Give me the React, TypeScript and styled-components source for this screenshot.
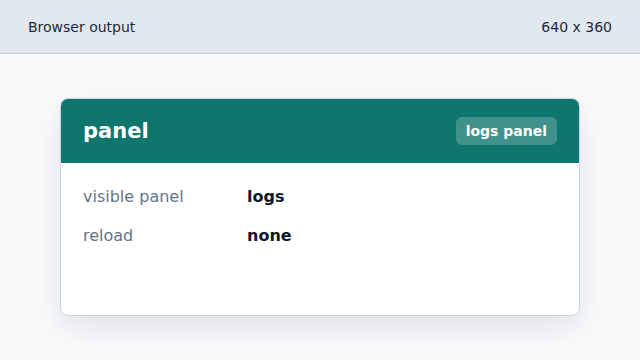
import React from "react";
import styled, { createGlobalStyle } from "styled-components";

const Global = createGlobalStyle`
  html, body { margin: 0; padding: 0; }
  body {
    font-family: "DejaVu Sans", "Liberation Sans", sans-serif;
    background: #f8fafc;
    width: 640px;
    height: 360px;
    overflow: hidden;
  }
`;

const Page = styled.div`
  display: flex;
  flex-direction: column;
  width: 640px;
  height: 360px;
`;

const TopBar = styled.header`
  display: flex;
  align-items: center;
  justify-content: space-between;
  height: 53px;
  padding: 0 28px;
  background: #e2e8f0;
  border-bottom: 1px solid #cbd5e1;
  color: #1e293b;
  font-size: 14px;
  flex-shrink: 0;
`;

const Stage = styled.main`
  flex: 1;
  display: flex;
  align-items: center;
  justify-content: center;
`;

const Card = styled.section`
  width: 520px;
  height: 218px;
  box-sizing: border-box;
  background: #ffffff;
  border: 1px solid #cbd5e1;
  border-radius: 8px;
  overflow: hidden;
  box-shadow: 0 12px 30px rgba(15, 23, 42, 0.1);
  display: flex;
  flex-direction: column;
`;

const CardHeader = styled.div`
  height: 64px;
  flex-shrink: 0;
  background: #0f766e;
  display: flex;
  align-items: center;
  justify-content: space-between;
  padding: 0 22px;
`;

const Title = styled.h2`
  margin: 0;
  color: #ffffff;
  font-size: 21px;
  font-weight: 700;
`;

const Badge = styled.span`
  background: rgba(255, 255, 255, 0.2);
  color: #ffffff;
  font-size: 14px;
  font-weight: 700;
  line-height: 18px;
  padding: 5px 10px;
  border-radius: 6px;
`;

const Body = styled.dl`
  margin: 0;
  padding: 21px 22px;
  display: grid;
  grid-template-columns: 164px 1fr;
  row-gap: 13px;
  align-content: start;
`;

const Label = styled.dt`
  color: #64748b;
  font-size: 16px;
  line-height: 26px;
`;

const Value = styled.dd`
  margin: 0;
  color: #0f172a;
  font-size: 16px;
  font-weight: 700;
  line-height: 26px;
`;

const rows = [
  { label: "visible panel", value: "logs" },
  { label: "reload", value: "none" },
];

export default function App() {
  return (
    <>
      <Global />
      <Page>
        <TopBar>
          <span>Browser output</span>
          <span>640 x 360</span>
        </TopBar>
        <Stage>
          <Card>
            <CardHeader>
              <Title>panel</Title>
              <Badge>logs panel</Badge>
            </CardHeader>
            <Body>
              {rows.map((r) => (
                <React.Fragment key={r.label}>
                  <Label>{r.label}</Label>
                  <Value>{r.value}</Value>
                </React.Fragment>
              ))}
            </Body>
          </Card>
        </Stage>
      </Page>
    </>
  );
}
